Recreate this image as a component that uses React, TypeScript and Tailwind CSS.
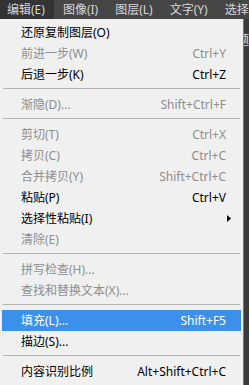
import React from "react";

type Item =
  | { kind: "sep" }
  | {
      kind: "item";
      label: string;
      shortcut?: string;
      disabled?: boolean;
      active?: boolean;
      submenu?: boolean;
    };

const topMenus = ["编辑(E)", "图像(I)", "图层(L)", "文字(Y)", "选择"];

const items: Item[] = [
  { kind: "item", label: "还原复制图层(O)" },
  { kind: "item", label: "前进一步(W)", shortcut: "Ctrl+Y", disabled: true },
  { kind: "item", label: "后退一步(K)", shortcut: "Ctrl+Z" },
  { kind: "sep" },
  { kind: "item", label: "渐隐(D)...", shortcut: "Shift+Ctrl+F", disabled: true },
  { kind: "sep" },
  { kind: "item", label: "剪切(T)", shortcut: "Ctrl+X", disabled: true },
  { kind: "item", label: "拷贝(C)", shortcut: "Ctrl+C", disabled: true },
  { kind: "item", label: "合并拷贝(Y)", shortcut: "Shift+Ctrl+C", disabled: true },
  { kind: "item", label: "粘贴(P)", shortcut: "Ctrl+V" },
  { kind: "item", label: "选择性粘贴(I)", submenu: true },
  { kind: "item", label: "清除(E)", disabled: true },
  { kind: "sep" },
  { kind: "item", label: "拼写检查(H)...", disabled: true },
  { kind: "item", label: "查找和替换文本(X)...", disabled: true },
  { kind: "sep" },
  { kind: "item", label: "填充(L)...", shortcut: "Shift+F5", active: true },
  { kind: "item", label: "描边(S)..." },
  { kind: "sep" },
  { kind: "item", label: "内容识别比例", shortcut: "Alt+Shift+Ctrl+C" },
];

const font = "font-['Noto_Sans','Noto_Sans_CJK_SC',sans-serif]";

function MenuRow({ item }: { item: Extract<Item, { kind: "item" }> }) {
  const color = item.active
    ? "bg-[#3b90ec] text-white"
    : item.disabled
    ? "text-[#8e8e8e]"
    : "text-black";

  return (
    <div className={`mx-[2px] flex h-[21px] items-center justify-between pl-[19px] pr-[15px] text-[12px] leading-none ${color}`}>
      <span>{item.label}</span>
      {item.shortcut && <span>{item.shortcut}</span>}
      {item.submenu && (
        <svg width="4" height="7" viewBox="0 0 4 7" className="mr-[-5px]">
          <path d="M0 0 L4 3.5 L0 7 Z" fill="#000" />
        </svg>
      )}
    </div>
  );
}

export default function App() {
  return (
    <div className={`flex h-[385px] w-[249px] flex-col overflow-hidden bg-[#3a3a3a] ${font}`}>
      {/* menu bar */}
      <div className="flex h-[19px] shrink-0 items-center bg-[#464646] text-[12px] text-[#d6d6d6]">
        {topMenus.map((m, i) => (
          <div
            key={m}
            className={`flex h-full items-center whitespace-nowrap px-[7px] ${i === 0 ? "bg-[#333333] pr-[9px]" : "pl-[9px] pr-[8px]"}`}
          >
            {m}
          </div>
        ))}
      </div>

      <div className="flex flex-1">
        {/* dropdown */}
        <div className="w-[244px] shrink-0 border-r border-[#7a7a7a] bg-[#f0f0f0] pt-[3px]">
          {items.map((it, i) =>
            it.kind === "sep" ? (
              <div key={i} className="h-[9px] px-[3px] pt-[3px]">
                <div className="h-px bg-[#b4b4b4]" />
              </div>
            ) : (
              <MenuRow key={i} item={it} />
            )
          )}
        </div>

        {/* panel behind the menu */}
        <div className="relative flex-1 overflow-hidden bg-[#3b3b3b]">
          <span className="absolute left-[-8px] top-[11px] text-[13px] text-[#e0e0e0]">题</span>
          <span className="absolute left-[-6px] top-[44px] text-[11px] text-[#bdbdbd]">a</span>
        </div>
      </div>
    </div>
  );
}
